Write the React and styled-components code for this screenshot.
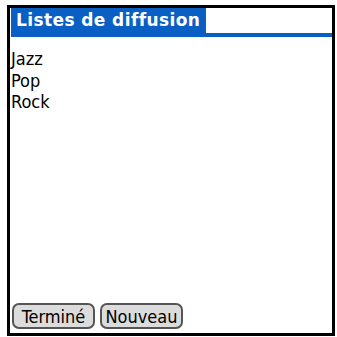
import React from 'react';
import styled, { createGlobalStyle } from 'styled-components';

const GlobalStyle = createGlobalStyle`
  html, body {
    margin: 0;
    padding: 0;
    background: #fff;
  }
`;

const Page = styled.div`
  width: 337px;
  height: 337px;
  padding: 5px 2px 1px 7px;
  box-sizing: border-box;
`;

const Screen = styled.div`
  width: 100%;
  height: 100%;
  box-sizing: border-box;
  border: 3px solid #000;
  display: flex;
  flex-direction: column;
  font-family: "DejaVu Sans Condensed", "DejaVu Sans", sans-serif;
`;

const TitleBar = styled.div`
  display: flex;
  align-items: flex-end;
  border-bottom: 4px solid #0a5fc4;
  margin: 0 0 0 1px;
`;

const TitleTab = styled.div`
  background: #0a5fc4;
  color: #fff;
  font-family: "DejaVu Sans", sans-serif;
  font-weight: bold;
  font-size: 17px;
  line-height: 25px;
  padding: 0 6px 0 5px;
  letter-spacing: 0.4px;
`;

const List = styled.div`
  flex: 1;
  display: flex;
  flex-direction: column;
  padding: 11px 0 0 1px;
`;

const Item = styled.div`
  font-size: 18px;
  line-height: 21.5px;
  color: #000;
`;

const Footer = styled.div`
  display: flex;
  gap: 5px;
  padding: 0 0 4px 2px;
`;

const Button = styled.button`
  font-family: "DejaVu Sans Condensed", "DejaVu Sans", sans-serif;
  font-size: 18px;
  height: 26px;
  width: 83px;
  padding: 0;
  background: #dcdcdc;
  color: #000;
  border: 2px solid #555;
  border-radius: 7px;
`;

export default function App() {
  return (
    <>
      <GlobalStyle />
      <Page>
        <Screen>
          <TitleBar>
            <TitleTab>Listes de diffusion</TitleTab>
          </TitleBar>
          <List>
            <Item>Jazz</Item>
            <Item>Pop</Item>
            <Item>Rock</Item>
          </List>
          <Footer>
            <Button>Terminé</Button>
            <Button>Nouveau</Button>
          </Footer>
        </Screen>
      </Page>
    </>
  );
}
